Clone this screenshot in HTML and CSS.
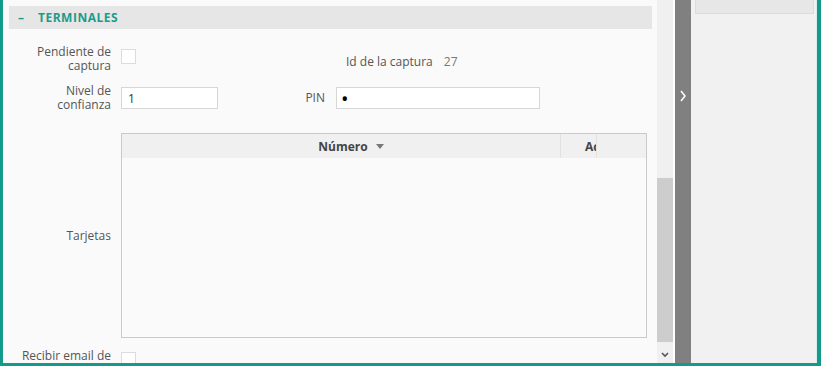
FILE: index.html
```html
<!DOCTYPE html>
<html lang="es">

<head>
	<meta charset="UTF-8">
	<meta name="viewport" content="width=device-width, initial-scale=1.0">
	<title>Terminales</title>
	<link rel="stylesheet" href="styles.css">
</head>

<body>
	<div class="frame">
		<div class="main">
			<div class="section-head"><span class="dash">–</span>TERMINALES</div>
			<div class="form">
				<div class="row row-first">
					<label class="lbl">Pendiente de<br>captura</label>
					<div class="field field-short"><input type="checkbox" class="check"></div>
					<div class="lbl lbl-second"></div>
					<div class="field field-long info"><span>Id de la captura</span><span class="val">27</span></div>
				</div>
				<div class="row row-second">
					<label class="lbl">Nivel de<br>confianza</label>
					<div class="field field-short"><input type="text" class="txt" value="1"></div>
					<label class="lbl lbl-second">PIN</label>
					<div class="field field-long"><input type="password" class="txt pin" value="x"></div>
				</div>
				<div class="row row-table">
					<label class="lbl">Tarjetas</label>
					<div class="grid">
						<div class="grid-head">
							<div class="col col-num">Número <span class="sort"></span></div>
							<div class="col col-act">Acciones</div>
							<div class="col col-rest"></div>
						</div>
						<div class="grid-body"></div>
					</div>
				</div>
				<div class="row row-last">
					<label class="lbl">Recibir email de</label>
					<div class="field field-short"><input type="checkbox" class="check"></div>
				</div>
			</div>
		</div>
		<div class="scrollbar">
			<div class="thumb"></div>
			<div class="arrow">
				<svg width="8" height="6" viewBox="0 0 8 6"><polyline points="1,1 4,4 7,1" fill="none" stroke="#555" stroke-width="1.6"/></svg>
			</div>
		</div>
		<div class="toggle">
			<svg width="8" height="12" viewBox="0 0 8 12"><polyline points="2,1 6,6 2,11" fill="none" stroke="#fff" stroke-width="1.5"/></svg>
		</div>
		<div class="side">
			<div class="side-box"></div>
		</div>
	</div>
</body>

</html>
```

FILE: styles.css
```css
body {
	margin: 0;
	padding: 0;
	font-family: "Open Sans", "Liberation Sans", sans-serif;
	font-size: 12px;
	color: #555;
	background: #fff;
}

.frame {
	display: flex;
	width: 821px;
	height: 366px;
	box-sizing: border-box;
	border-left: 3px solid #149a8b;
	border-right: 4px solid #149a8b;
	border-bottom: 3px solid #149a8b;
	overflow: hidden;
}

.main {
	width: 654px;
	background: #fafafa;
	padding-top: 6px;
	overflow: hidden;
}

.section-head {
	height: 23px;
	line-height: 23px;
	margin: 0 5px 0 6px;
	background: #e6e6e6;
	color: #1a9c8c;
	font-weight: bold;
	font-size: 12px;
	letter-spacing: 0.5px;
}

.dash {
	display: inline-block;
	width: 29px;
	padding-left: 9px;
	box-sizing: border-box;
}

.form {
	padding: 16px 0 0 8px;
}

.row {
	display: flex;
	align-items: center;
}

.lbl {
	width: 100px;
	margin-right: 10px;
	text-align: right;
	line-height: 14px;
	color: #555;
	flex-shrink: 0;
}

.lbl-second {
	margin-right: 11px;
}

.field-short {
	width: 104px;
	flex-shrink: 0;
}

.field-long {
	width: 204px;
}

.row-first {
	align-items: flex-start;
}

.row-first .check {
	margin-top: 4px;
}

.info {
	padding: 8px 0 0 10px;
	box-sizing: border-box;
	color: #555;
}

.val {
	margin-left: 11px;
	color: #777;
}

.row-second {
	margin-top: 11px;
}

.check {
	appearance: none;
	-webkit-appearance: none;
	display: block;
	width: 15px;
	height: 15px;
	margin: 0;
	border: 1px solid #dcdcdc;
	background: #fff;
}

.txt {
	display: block;
	width: 100%;
	height: 22px;
	box-sizing: border-box;
	border: 1px solid #d6d6d6;
	background: #fff;
	padding: 0 6px;
	font-family: "Open Sans", "Liberation Sans", sans-serif;
	font-size: 12px;
	color: #333;
	outline: none;
}

.pin {
	font-size: 20px;
	color: #000;
	padding-left: 4px;
}

.field-short .txt {
	width: 97px;
}

.row-table {
	margin-top: 21px;
}

.grid {
	width: 526px;
	height: 205px;
	box-sizing: border-box;
	border: 1px solid #c9c9c9;
	background: #fafafa;
}

.grid-head {
	display: flex;
	height: 24px;
	background: #f0f0f0;
	font-weight: bold;
	color: #444;
}

.col {
	display: flex;
	align-items: center;
	border-right: 1px solid #e2e2e2;
	overflow: hidden;
	white-space: nowrap;
}

.col-num {
	width: 439px;
	justify-content: center;
	padding-left: 20px;
	box-sizing: border-box;
}

.sort {
	display: inline-block;
	margin-left: 8px;
	border-left: 4px solid transparent;
	border-right: 4px solid transparent;
	border-top: 5px solid #777;
}

.col-act {
	width: 36px;
	padding-left: 24px;
	box-sizing: border-box;
}

.col-rest {
	flex: 1;
	border-right: none;
}

.row-last {
	margin-top: 11px;
	align-items: flex-start;
}

.row-last .check {
	margin-top: 3px;
}

.scrollbar {
	width: 16px;
	background: #f0f0f0;
	flex-shrink: 0;
}

.thumb {
	margin-top: 178px;
	height: 164px;
	background: #cdcdcd;
}

.arrow {
	display: flex;
	justify-content: center;
	padding-top: 10px;
}

.toggle {
	width: 16px;
	margin-left: 2px;
	background: #808080;
	display: flex;
	justify-content: center;
	padding-top: 90px;
	box-sizing: border-box;
	flex-shrink: 0;
}

.side {
	flex: 1;
	background: #f1f1f1;
	padding: 0 2px 0 4px;
	border-right: 1px solid #d6eeec;
}

.side-box {
	height: 13px;
	background: #e7e7e7;
	border: 1px solid #dcdcdc;
	border-top: none;
}
```
